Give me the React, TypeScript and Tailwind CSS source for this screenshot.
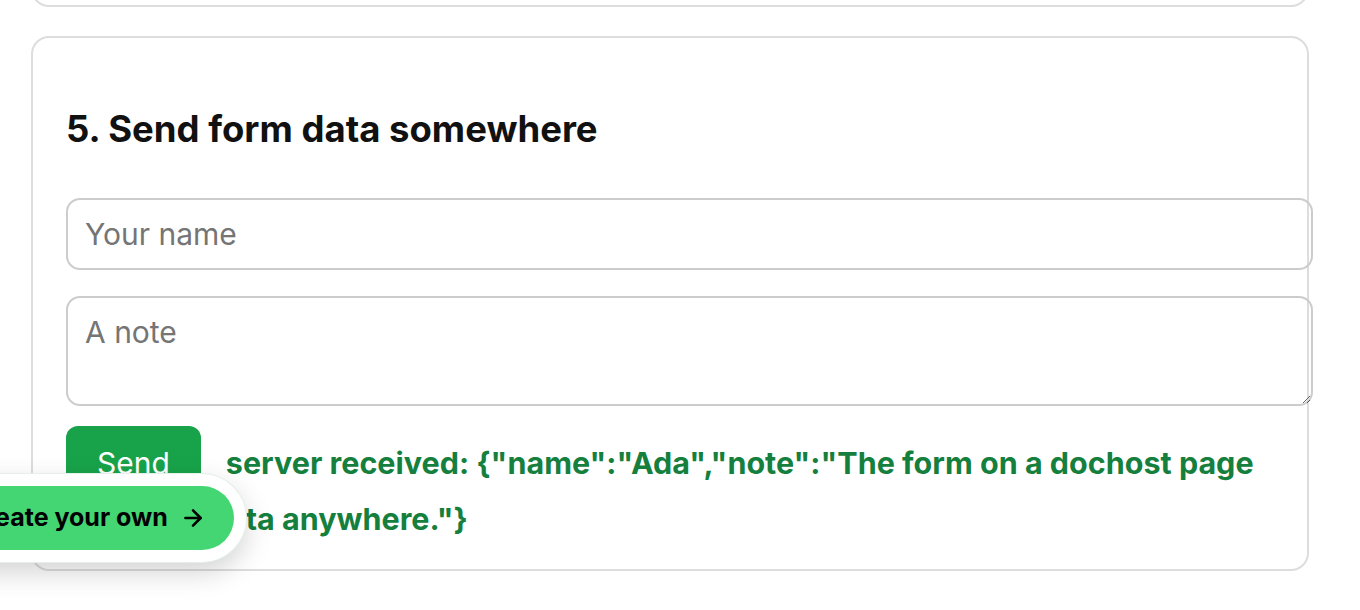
import React from 'react';
import { ArrowRight } from "lucide-react";

const font = { fontFamily: 'Inter, "Noto Sans", sans-serif' };

const CreateYourOwn: React.FC = () => (
  <div className="fixed left-[-77px] bottom-[48px] rounded-full border-[12px] border-white bg-white shadow-[0_10px_28px_rgba(0,0,0,0.18)] ring-1 ring-[#e3efe7]">
    <a className="flex items-center gap-[12px] h-[64px] rounded-full bg-[#43d672] pl-[32px] pr-[28px] text-[25px] font-bold text-black">
      Create your own
      <ArrowRight className="w-[26px] h-[26px]" strokeWidth={2.4} />
    </a>
  </div>
);

export default function App() {
  return (
    <div className="min-h-[610px] bg-white overflow-hidden" style={font}>
      {/* tail of the previous card */}
      <div className="mx-[31px] w-[1278px] h-[40px] -mt-[33px] rounded-[18px] border-2 border-[#dddddd]" />

      <div className="mx-[31px] mt-[29px] w-[1278px] rounded-[18px] border-2 border-[#dddddd] pl-[33px] pr-[31px] pt-[70px] pb-[22px]">
        <h2 className="text-[36.5px] leading-[42px] font-bold text-[#111111]">
          5. Send form data somewhere
        </h2>

        <form className="mt-[48px]" onSubmit={(e) => e.preventDefault()}>
          <input
            className="block w-[1247px] h-[72px] rounded-[14px] border-2 border-[#cccccc] px-[17px] text-[30px] text-[#111] placeholder:text-[#757575] outline-none"
            placeholder="Your name"
          />
          <textarea
            className="block mt-[26px] w-[1247px] h-[110px] rounded-[14px] border-2 border-[#cccccc] px-[17px] py-[16px] text-[30px] leading-[36px] text-[#111] placeholder:text-[#757575] outline-none"
            placeholder="A note"
          />
          <div className="mt-[20px] text-[30.5px] leading-[56px] font-bold text-[#15803d]">
            <button
              type="submit"
              className="inline-block align-baseline h-[62px] rounded-[12px] bg-[#18a34a] px-[31px] pt-[13px] text-[30px] leading-[49px] font-normal text-white"
            >
              Send
            </button>
            <span className="ml-[25px]">
              server received: {'{"name":"Ada","note":"The form on a dochost page can send data anywhere."}'}
            </span>
          </div>
        </form>
      </div>

      <CreateYourOwn />
    </div>
  );
}
